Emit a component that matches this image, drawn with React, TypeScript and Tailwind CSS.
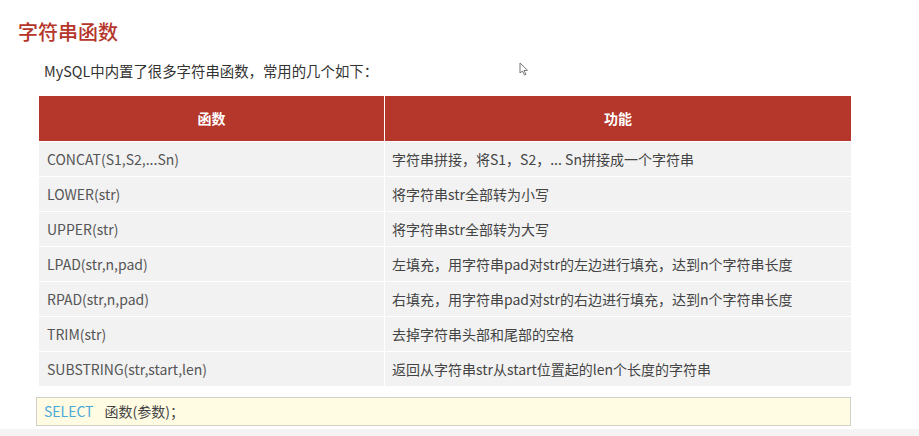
import React from "react";

const rows: [string, string][] = [
  ["CONCAT(S1,S2,...Sn)", "字符串拼接，将S1，S2，... Sn拼接成一个字符串"],
  ["LOWER(str)", "将字符串str全部转为小写"],
  ["UPPER(str)", "将字符串str全部转为大写"],
  ["LPAD(str,n,pad)", "左填充，用字符串pad对str的左边进行填充，达到n个字符串长度"],
  ["RPAD(str,n,pad)", "右填充，用字符串pad对str的右边进行填充，达到n个字符串长度"],
  ["TRIM(str)", "去掉字符串头部和尾部的空格"],
  ["SUBSTRING(str,start,len)", "返回从字符串str从start位置起的len个长度的字符串"],
];

export default function App() {
  return (
    <div
      className="relative w-[919px] h-[436px] bg-white overflow-hidden flex flex-col"
      style={{ fontFamily: '"Noto Sans CJK SC", "Noto Sans", sans-serif' }}
    >
      <div className="flex-1 flex flex-col">
        <div className="pt-[18px] pl-[18px] text-[20px] leading-[28px] font-medium text-[#b5362a]">
          字符串函数
        </div>
        <div className="mt-[15px] pl-[44px] text-[14.4px] leading-[20px] text-[#333]">
          MySQL中内置了很多字符串函数，常用的几个如下：
        </div>
        <div className="mt-[15px] ml-[39px] w-[812px] flex flex-col gap-px">
          <div className="grid grid-cols-[345px_1fr] gap-px h-[45px]">
            <div className="bg-[#b5362a] flex items-center justify-center text-white text-[14px] font-bold">
              函数
            </div>
            <div className="bg-[#b5362a] flex items-center justify-center text-white text-[14px] font-bold">
              功能
            </div>
          </div>
          {rows.map(([f, d]) => (
            <div key={f} className="grid grid-cols-[345px_1fr] gap-px h-[34px]">
              <div className="bg-[#f2f2f2] flex items-center pl-[8px] text-[14px] text-[#555]">
                {f}
              </div>
              <div className="bg-[#f2f2f2] flex items-center pl-[7px] text-[14px] text-[#444]">
                {d}
              </div>
            </div>
          ))}
        </div>
        <div className="mt-[11px] ml-[36px] w-[815px] h-[29px] bg-[#fffce3] border border-[#d0d0c8] flex items-center pl-[7px] text-[14px]">
          <span className="text-[#4aa8d8]">SELECT</span>
          <span className="ml-[11px] text-[#444]">函数(参数)；</span>
        </div>
      </div>
      <div className="h-[7px] bg-[#f4f4f4]" />
      <svg
        className="absolute left-[519px] top-[62px]"
        width="10"
        height="14"
        viewBox="0 0 10 14"
      >
        <path d="M1 1 L1 11 L3.5 9 L5.5 13 L7 12.3 L5 8.5 L8.5 8.3 Z" fill="white" stroke="#777" strokeWidth="1" />
      </svg>
    </div>
  );
}
